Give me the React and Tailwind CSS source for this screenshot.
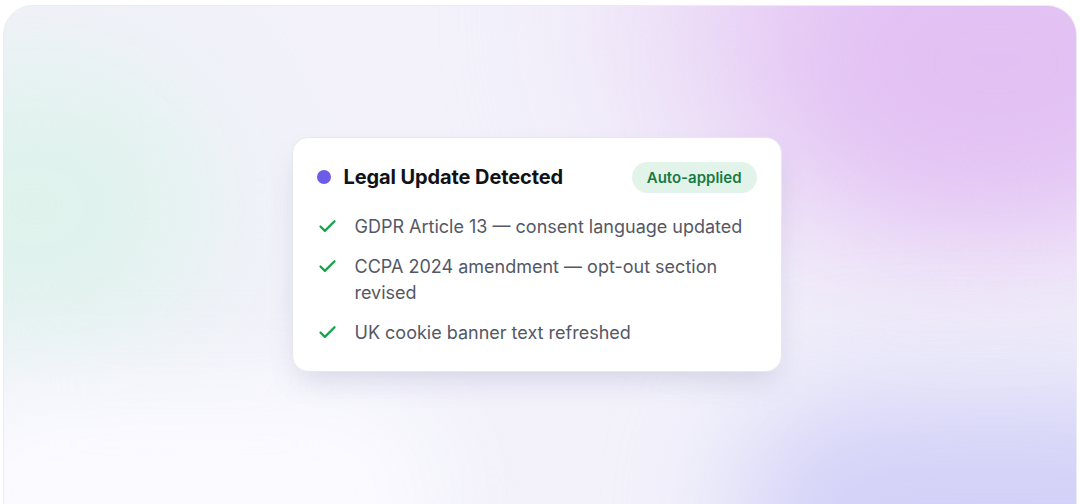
import { Check } from 'lucide-react';

const items = [
    'GDPR Article 13 — consent language updated',
    'CCPA 2024 amendment — opt-out section revised',
    'UK cookie banner text refreshed',
];

export default function App() {
    return (
        <div className="h-[504px] w-full overflow-hidden bg-white pt-[5px] px-[3px] font-['Inter',sans-serif]">
            <div className="relative h-[540px] w-full overflow-hidden rounded-[30px] bg-[#f3f2fb] border border-[#ecebf3]">
                {/* soft colour blobs behind the card */}
                <div className="absolute -left-[150px] top-[50px] h-[300px] w-[360px] rounded-full bg-[#def2ec] blur-[70px]" />
                <div className="absolute left-[620px] -top-[180px] h-[380px] w-[620px] rounded-full bg-[#ead6f6] blur-[90px]" />
                <div className="absolute right-[-140px] -top-[110px] h-[330px] w-[440px] rounded-full bg-[#e2c0f3] blur-[70px]" />
                <div className="absolute right-[-180px] bottom-[-90px] h-[240px] w-[520px] rounded-full bg-[#d2d0f7] blur-[60px]" />
                <div className="absolute left-[-80px] bottom-[-60px] h-[220px] w-[520px] rounded-full bg-[#fafaff] blur-[50px]" />

                <div className="relative flex h-[496px] items-center justify-center pr-[7px]">
                    <div className="w-[490px] rounded-2xl border border-[#e7e7ee] bg-white px-6 pt-6 pb-[25px] shadow-[0_14px_30px_-8px_rgba(90,90,140,0.22)]">
                        <div className="flex items-center justify-between">
                            <div className="flex items-center gap-[13px]">
                                <span className="h-[14px] w-[14px] rounded-full bg-[#6c5ce7]" />
                                <h2 className="text-[20px] font-bold tracking-[-0.1px] text-[#111216]">Legal Update Detected</h2>
                            </div>
                            <span className="rounded-full bg-[#e2f4ea] px-[15px] py-[5px] text-[15px] font-semibold leading-[21px] text-[#177a44]">
                                Auto-applied
                            </span>
                        </div>

                        <ul className="mt-[21px] flex flex-col gap-[14px]">
                            {items.map((text) => (
                                <li key={text} className="flex items-start gap-[17px]">
                                    <Check className="mt-[2px] h-[21px] w-[21px] shrink-0 text-[#16a34a]" strokeWidth={2.6} />
                                    <span className="max-w-[395px] text-[18px] leading-[26px] text-[#545866]">{text}</span>
                                </li>
                            ))}
                        </ul>
                    </div>
                </div>
            </div>
        </div>
    );
}
